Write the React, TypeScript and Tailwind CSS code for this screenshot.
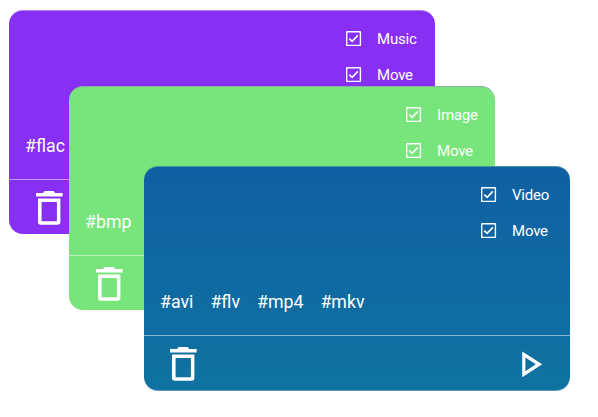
type CardProps = {
  place: string;
  background: string;
  category: string;
  tags: string[];
  trashInset: string;
};

function CheckBox({ label }: { label: string }) {
  return (
    <label className="flex h-[36px] items-center">
      <svg className="size-[16px] shrink-0" viewBox="0 0 16 16" fill="none" stroke="white">
        <rect x="0.7" y="0.7" width="13.7" height="13.7" rx="0.5" strokeWidth="1.4" />
        <path d="M3.3 7.7 6.1 10.4 11.8 4.4" strokeWidth="1.6" />
      </svg>
      <span className="ml-[15px] text-[15px] leading-[18px] tracking-[-0.2px]">{label}</span>
    </label>
  );
}

function TrashIcon() {
  return (
    <svg className="h-[34px] w-[27px]" viewBox="0 0 27 34" fill="white">
      <path d="M0 2H7L8.6 0H17.6L19.2 2H26.6V5.6H0Z" />
      <path
        fillRule="evenodd"
        d="M2 7.6H24.4V31Q24.4 33.7 21.6 33.7H4.8Q2 33.7 2 31ZM5.6 11.1V30.2H20.9V11.1Z"
      />
    </svg>
  );
}

function PlayIcon() {
  return (
    <svg className="h-[27px] w-[21px]" viewBox="0 0 21 27" fill="white">
      <path fillRule="evenodd" d="M0.2 0.4 20.2 13.2 0.2 26.3ZM3.4 6.4V20.2L13.8 13.2Z" />
    </svg>
  );
}

function Card({ place, background, category, tags, trashInset }: CardProps) {
  return (
    <section
      className={`absolute flex w-[426px] flex-col overflow-hidden rounded-[14px] border-t text-white ${place} ${background}`}
    >
      <div className="flex h-[168px] flex-col justify-between pt-[10px]">
        <div className="ml-[337px]">
          <CheckBox label={category} />
          <CheckBox label="Move" />
        </div>
        <div className="mb-[21px] ml-[16px] flex gap-[17px] text-[17.75px] leading-[24px]">
          {tags.map((tag) => (
            <span key={tag}>{tag}</span>
          ))}
        </div>
      </div>
      <div className={`flex h-[55px] items-start justify-between border-t border-white/50 pt-[11px] pr-[27px] ${trashInset}`}>
        <TrashIcon />
        <div className="pt-[4px]">
          <PlayIcon />
        </div>
      </div>
    </section>
  );
}

export default function App() {
  return (
    <main className="relative h-[417px] w-[598px] overflow-hidden bg-white font-[Roboto,sans-serif]">
      <Card
        place="top-[10px] left-[9px] h-[224px]"
        background="bg-[#872ff3] border-white/35"
        category="Music"
        tags={["#flac"]}
        trashInset="pl-[27px]"
      />
      <Card
        place="top-[86px] left-[69px] h-[224px]"
        background="bg-[#78e57c] border-[#8fa8a8]"
        category="Image"
        tags={["#bmp"]}
        trashInset="pl-[27px]"
      />
      <Card
        place="top-[166px] left-[144px] h-[225px] border-b"
        background="bg-linear-to-b from-[#1060a3] to-[#0f73a0] border-t-[#4595a0] border-b-white/35"
        category="Video"
        tags={["#avi", "#flv", "#mp4", "#mkv"]}
        trashInset="pl-[26px]"
      />
    </main>
  );
}
